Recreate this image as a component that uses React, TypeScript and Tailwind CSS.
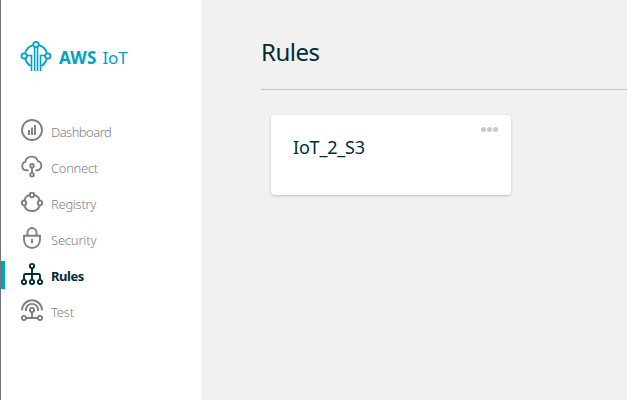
import type { ReactNode } from "react";

function Icon({ children }: { children: ReactNode }) {
  return (
    <svg className="h-6 w-6 shrink-0" viewBox="0 0 24 24" fill="none" stroke="currentColor" strokeWidth="1.9">
      {children}
    </svg>
  );
}

const items: { label: string; tracking: string; icon: ReactNode }[] = [
  {
    label: "Dashboard",
    tracking: "tracking-[-0.55px]",
    icon: (
      <>
        <circle cx="12" cy="12" r="10" />
        <path d="M9 17v-5M12 17v-7.5M15 17V7" strokeWidth="2" />
      </>
    ),
  },
  {
    label: "Connect",
    tracking: "tracking-[-0.3px]",
    icon: (
      <>
        <path d="M8.5 16.3H6.3A4.3 4.3 0 0 1 5.3 7.9A6.5 6.5 0 0 1 17.9 7.2A4.7 4.7 0 0 1 17.7 16.3H15.5" />
        <circle cx="12" cy="11.8" r="1.8" />
        <path d="M12 13.5v5.5" />
        <circle cx="12" cy="20.7" r="1.8" />
      </>
    ),
  },
  {
    label: "Registry",
    tracking: "tracking-[-0.3px]",
    icon: (
      <>
        <path d="M9.5 4.9A8.3 8.3 0 0 0 4.3 10.4M14.5 4.9A8.3 8.3 0 0 1 19.7 10.4M4.2 15.6A8.3 8.3 0 0 0 19.8 15.6" />
        <circle cx="12" cy="5" r="2.2" />
        <circle cx="4" cy="13" r="2.2" />
        <circle cx="20" cy="13" r="2.2" />
      </>
    ),
  },
  {
    label: "Security",
    tracking: "tracking-[-0.2px]",
    icon: (
      <path d="M4 9.7H20V13.5C20 18.5 16.5 22 12 22S4 18.5 4 13.5ZM7.5 9V6.5A4.5 4.5 0 0 1 16.5 6.5V9M12 13v4.3" />
    ),
  },
  {
    label: "Rules",
    tracking: "tracking-[-0.45px]",
    icon: (
      <>
        <circle cx="12" cy="4" r="2.1" />
        <path d="M12 6v12M4 18v-4.5Q4 12 5.5 12H18.5Q20 12 20 13.5V18" />
        <circle cx="4" cy="20" r="2.1" />
        <circle cx="12" cy="20" r="2.1" />
        <circle cx="20" cy="20" r="2.1" />
      </>
    ),
  },
  {
    label: "Test",
    tracking: "tracking-[-0.2px]",
    icon: (
      <>
        <path d="M2 12.3A10 10 0 0 1 22 12.3M5.9 12.8A6.15 6.15 0 1 1 18.1 12.8" />
        <circle cx="12" cy="12" r="2.1" />
        <path d="M12 14V20M6 20H18" />
        <circle cx="4" cy="20" r="2.1" />
        <circle cx="20" cy="20" r="2.1" />
      </>
    ),
  },
];

function Logo() {
  return (
    <svg className="h-8 w-8 shrink-0 text-[#00a1c9]" viewBox="0 0 32 32" fill="none" stroke="currentColor" strokeWidth="1.8">
      <path d="M13 5.2A12 12 0 0 0 5.2 13M19 5.2A12 12 0 0 1 26.8 13M5.2 18.8A12 12 0 0 0 10.5 26M26.8 18.8A12 12 0 0 1 21.5 26" />
      <circle cx="16" cy="4.5" r="2.7" />
      <circle cx="4.2" cy="16" r="2.7" />
      <circle cx="27.8" cy="16" r="2.7" />
      <path d="M14.6 7.2V31M17.5 7.2V31M7 15.5H11.5V31M25 15.5H20.5V31" strokeWidth="1.6" />
    </svg>
  );
}

export default function App() {
  return (
    <div className="flex h-[400px] w-[627px] overflow-hidden bg-[#f1f1f1] font-['Noto_Sans',sans-serif] text-[#002b36]">
      <aside className="w-[201px] shrink-0 border-l border-[#737373] bg-white">
        <div className="flex items-center gap-[7px] pt-[40px] pl-[19px]">
          <Logo />
          <h2 className="flex gap-[6px] pt-[3px] text-[17px] leading-[29px] whitespace-nowrap text-[#00a1c9]">
            <b className="font-bold tracking-[0.2px]">AWS</b>
            <span className="font-normal tracking-[-0.2px]">IoT</span>
          </h2>
        </div>
        <nav className="mt-[46px]">
          {items.map(({ label, tracking, icon }) => {
            const active = label === "Rules";
            return (
              <div key={label} className={`flex h-9 items-start ${active ? "text-[#002b36]" : "text-[#808080]"}`}>
                <span className={`h-7 w-1 ${active ? "-mt-px bg-[#00a1c9]" : ""}`} />
                <span className="ml-[15px]">
                  <Icon>{icon}</Icon>
                </span>
                <span className={`ml-[7px] pt-[4px] text-[13px] leading-5 ${tracking} ${active ? "font-bold" : "font-light"}`}>
                  {label}
                </span>
              </div>
            );
          })}
        </nav>
      </aside>
      <main className="flex-1 pl-[60px]">
        <h1 className="h-[90px] border-b border-[#c8c8c8] pt-[36px] text-[24px] leading-8 tracking-[-0.5px]">Rules</h1>
        <section className="mt-[25px] ml-[10px] flex h-[80px] w-[240px] items-start justify-between rounded-[4px] bg-white shadow-[0_1px_3px_rgba(0,0,0,0.2)]">
          <span className="pt-[20px] pl-[22px] text-[18px] leading-6 tracking-[-0.2px]">IoT_2_S3</span>
          <span className="mt-3 mr-[13.5px] flex gap-[1.5px]">
            <i className="h-[4.5px] w-[4.5px] rounded-full bg-[#c8c8c8]" />
            <i className="h-[4.5px] w-[4.5px] rounded-full bg-[#c8c8c8]" />
            <i className="h-[4.5px] w-[4.5px] rounded-full bg-[#c8c8c8]" />
          </span>
        </section>
      </main>
    </div>
  );
}
